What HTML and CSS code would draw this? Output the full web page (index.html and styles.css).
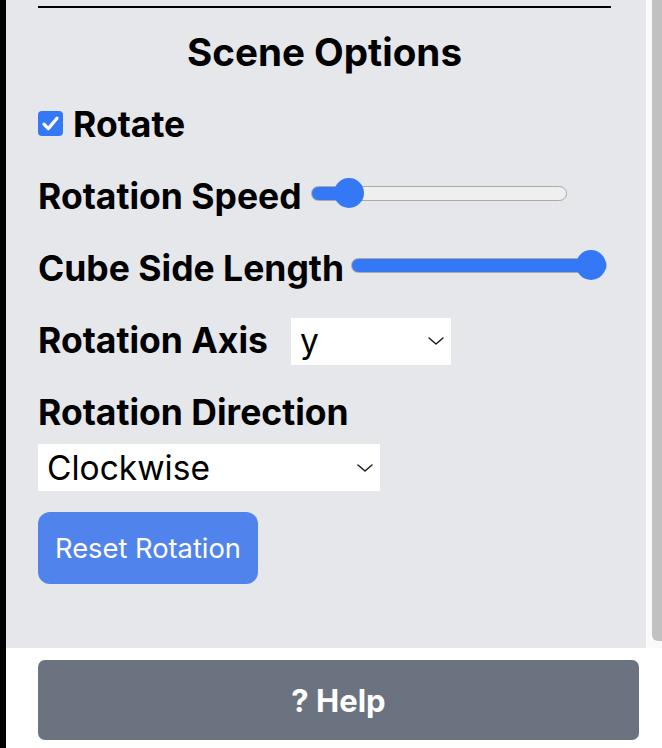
FILE: index.html
```html
<!DOCTYPE html>
<html lang="en">
<head>
<meta charset="utf-8">
<title>Scene Options</title>
<link rel="stylesheet" href="styles.css">
</head>
<body>
<div class="app">
  <div class="edge"></div>
  <div class="main">
    <div class="panel">
      <div class="panel-body">
        <div class="divider"></div>
        <h2 class="title">Scene Options</h2>

        <label class="row row-check">
          <span class="checkbox">
            <svg viewBox="0 0 25 25" width="25" height="25"><path d="M6 13.2 L10.3 17.6 L19 7.2" fill="none" stroke="#fff" stroke-width="3.3" stroke-linecap="round" stroke-linejoin="round"/></svg>
          </span>
          <span class="label">Rotate</span>
        </label>

        <div class="row">
          <span class="label">Rotation Speed</span>
          <input class="range range-speed" type="range" min="0" max="100" value="10" style="--fill: 14.7%">
        </div>

        <div class="row">
          <span class="label">Cube Side Length</span>
          <input class="range range-size" type="range" min="0" max="100" value="100" style="--fill: 100%">
        </div>

        <div class="row">
          <span class="label">Rotation Axis</span>
          <div class="select-wrap select-axis">
            <select class="select">
              <option>y</option>
              <option>x</option>
              <option>z</option>
            </select>
            <svg class="chev" viewBox="0 0 16 8" width="16" height="8"><path d="M1 1 L8 7 L15 1" fill="none" stroke="#1a1a1a" stroke-width="1.5" stroke-linecap="round" stroke-linejoin="round"/></svg>
          </div>
        </div>

        <div class="row row-dir">
          <span class="label">Rotation Direction</span>
        </div>
        <div class="select-wrap select-dir">
          <select class="select">
            <option>Clockwise</option>
            <option>Counterclockwise</option>
          </select>
          <svg class="chev" viewBox="0 0 16 8" width="16" height="8"><path d="M1 1 L8 7 L15 1" fill="none" stroke="#1a1a1a" stroke-width="1.5" stroke-linecap="round" stroke-linejoin="round"/></svg>
        </div>

        <button class="btn-reset" type="button">Reset Rotation</button>
      </div>
      <div class="scrollbar"><div class="thumb"></div></div>
    </div>
    <div class="footer">
      <button class="btn-help" type="button">? Help</button>
    </div>
  </div>
</div>
</body>
</html>
```

FILE: styles.css
```css
* { box-sizing: border-box; }

html, body {
  margin: 0;
  padding: 0;
  height: 100%;
  overflow: hidden;
  background: #ffffff;
}

body {
  font-family: Inter, "Liberation Sans", sans-serif;
  color: #000;
}

.app {
  display: flex;
  width: 662px;
  height: 748px;
}

.edge {
  width: 6px;
  flex: 0 0 6px;
  background: #000;
}

.main {
  flex: 1;
  display: flex;
  flex-direction: column;
}

.panel {
  height: 648px;
  display: flex;
  background: #e5e7eb;
}

.panel-body {
  width: 640px;
  padding: 6px 0 0 32px;
}

.divider {
  width: 573px;
  height: 2px;
  background: #000;
}

.title {
  margin: 21px 0 0 0;
  width: 573px;
  text-align: center;
  font-size: 38.6px;
  line-height: 46px;
  font-weight: 700;
}

.row {
  display: flex;
  align-items: center;
  height: 50px;
  margin-top: 22px;
}

.row-check {
  margin-top: 25px;
  gap: 10px;
}

.label {
  font-size: 35.5px;
  line-height: 50px;
  font-weight: 700;
  white-space: nowrap;
}

.checkbox {
  width: 25px;
  height: 25px;
  border-radius: 4px;
  background: #3478f6;
  display: flex;
  margin-bottom: 3px;
}

.range {
  -webkit-appearance: none;
  appearance: none;
  width: 256px;
  height: 30px;
  margin: 0 0 8px 0;
  background: transparent;
}

.range-speed { margin-left: 9px; }
.range-size { margin-left: 7px; }

.range::-webkit-slider-runnable-track {
  box-sizing: border-box;
  height: 15px;
  border: 1.5px solid #aaaaaa;
  border-radius: 8px;
  background: linear-gradient(to right, #3478f6 var(--fill), #efefef var(--fill));
}

.range::-webkit-slider-thumb {
  -webkit-appearance: none;
  appearance: none;
  width: 30px;
  height: 30px;
  border: none;
  border-radius: 50%;
  background: #3478f6;
  margin-top: -9px;
}

.select-wrap {
  position: relative;
  height: 47px;
}

.select-axis {
  width: 160px;
  margin-left: 23px;
}

.select-dir {
  width: 342px;
  margin-top: 6px;
}

.select {
  -webkit-appearance: none;
  appearance: none;
  display: block;
  width: 100%;
  height: 47px;
  border: 0;
  border-radius: 0;
  background: #fff;
  color: #000;
  font-family: Inter, "Liberation Sans", sans-serif;
  font-size: 33.5px;
  font-weight: 400;
  padding: 0 0 0 9px;
  margin: 0;
}

.chev {
  position: absolute;
  right: 7px;
  top: 50%;
  margin-top: -4px;
  pointer-events: none;
}

.btn-reset {
  display: block;
  margin-top: 21px;
  height: 72px;
  padding: 0 17px;
  border: 0;
  border-radius: 12px;
  background: #5083ec;
  color: #fff;
  font-family: Inter, "Liberation Sans", sans-serif;
  font-size: 27.3px;
  font-weight: 400;
}

.scrollbar {
  width: 16px;
  flex: 0 0 16px;
  background: #fafafa;
  padding-left: 6px;
}

.thumb {
  height: 641px;
  background: #c1c1c1;
  border-bottom-left-radius: 6px;
}

.footer {
  flex: 1;
  background: #fff;
  padding: 12px 23px 0 32px;
}

.btn-help {
  display: block;
  width: 601px;
  height: 80px;
  border: 0;
  border-radius: 7px;
  background: #6b7280;
  color: #fff;
  font-family: Inter, "Liberation Sans", sans-serif;
  font-size: 31px;
  font-weight: 700;
}
```
